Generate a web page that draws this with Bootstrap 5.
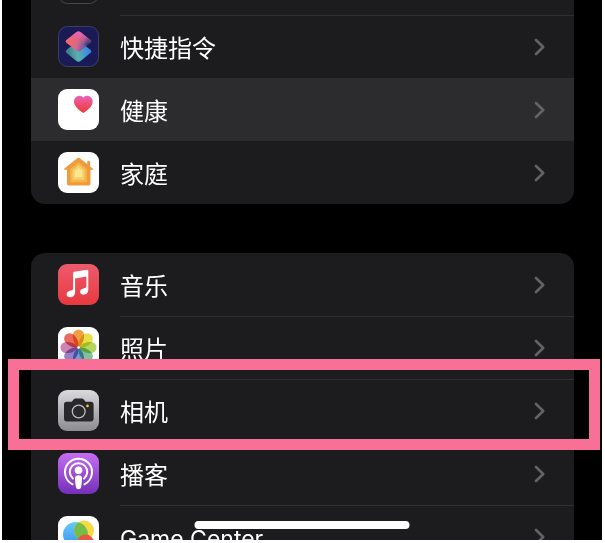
<!DOCTYPE html>
<html lang="zh-CN" data-bs-theme="dark">
<head>
<meta charset="utf-8">
<meta name="viewport" content="width=device-width, initial-scale=1">
<title>设置</title>
<link href="https://cdn.jsdelivr.net/npm/bootstrap@5.3.0/dist/css/bootstrap.min.css" rel="stylesheet">
<style>
body { background: #fff; font-family: Inter, "Noto Sans CJK SC", sans-serif; }
.frame { height: 100vh; padding: 0 3px 3px 2px; }
.screen { background: #000; padding: 0 28px 0 29px; }
.settings-group { border-radius: 14px; background: #1c1c1e; margin-bottom: 49px; }
.scrolled { margin-top: -48px; }
.settings-row { height: 63px; padding-left: 27px; color: #fff; background: transparent; }
.settings-row:hover, .settings-row:focus { color: #fff; }
.settings-row.pressed { background: #2c2c2e; }
.app-icon { width: 41px; height: 41px; margin-right: 21px; }
.row-body { padding: 3px 29px 0 0; font-size: 24px; line-height: 32px; border-top: 1px solid #303032; }
.latin { font-size: 23px; }
.settings-row:first-child .row-body, .pressed .row-body, .pressed + .settings-row .row-body { border-top-color: transparent; }
.chevron { width: 11px; height: 18px; margin-bottom: 3px; fill: none; stroke: #636366; stroke-width: 2.6; stroke-linecap: round; stroke-linejoin: round; }
.highlight { inset: -20px -26px -8px -23px; border: 11px solid #f87096; z-index: 2; pointer-events: none; }
.home-bar { width: 215px; height: 8px; bottom: 11px; z-index: 3; }
.petals { isolation: isolate; }
.petals path { mix-blend-mode: multiply; }
</style>
</head>
<body>
<svg width="0" height="0" class="position-absolute" aria-hidden="true">
  <defs>
    <linearGradient id="gTop" x1=".1" y1=".6" x2=".85" y2=".75"><stop offset="0" stop-color="#f26a62"/><stop offset=".45" stop-color="#d8668c"/><stop offset=".75" stop-color="#8a5a9c"/><stop offset="1" stop-color="#4a4a90" stop-opacity=".55"/></linearGradient>
    <linearGradient id="gPink" x1="0" y1="0" x2="0" y2="1"><stop offset="0" stop-color="#ed62c8"/><stop offset=".65" stop-color="#ed625c" stop-opacity="0"/></linearGradient>
    <linearGradient id="gLow" x1="0" y1=".5" x2="1" y2=".4"><stop offset="0" stop-color="#3d7387"/><stop offset=".45" stop-color="#57b2ad"/><stop offset="1" stop-color="#347df2"/></linearGradient>
    <linearGradient id="gHeart" x1="0" y1="0" x2="0" y2="1"><stop offset="0" stop-color="#eb62b9"/><stop offset="1" stop-color="#f0382f"/></linearGradient>
    <linearGradient id="gHouse" x1="0" y1="0" x2="0" y2="1"><stop offset="0" stop-color="#ed9c3f"/><stop offset="1" stop-color="#f19a38"/></linearGradient>
    <linearGradient id="gMusic" x1="0" y1="0" x2="0" y2="1"><stop offset="0" stop-color="#ed5b6d"/><stop offset="1" stop-color="#e7393f"/></linearGradient>
    <linearGradient id="gCamera" x1="0" y1="0" x2="0" y2="1"><stop offset="0" stop-color="#d9d9de"/><stop offset="1" stop-color="#8d8c90"/></linearGradient>
    <linearGradient id="gPod" x1="0" y1="0" x2="0" y2="1"><stop offset="0" stop-color="#c56df3"/><stop offset="1" stop-color="#7430b8"/></linearGradient>
    <linearGradient id="gBlue" x1="0" y1="0" x2="0" y2="1"><stop offset="0" stop-color="#66cdf7"/><stop offset="1" stop-color="#3b8df3"/></linearGradient>
    <clipPath id="cBlue"><circle cx="17.500" cy="18.500" r="12.500"/></clipPath>
    <symbol id="chev" viewBox="0 0 11 18"><path d="M2 2 9.200 9 2 16"/></symbol>
  </defs>
</svg>

<div class="frame">
<main class="screen position-relative overflow-hidden h-100">
  <nav class="settings-group scrolled">
    <a href="#" class="settings-row d-flex align-items-center text-decoration-none" tabindex="-1">
      <svg class="app-icon flex-shrink-0" viewBox="0 0 41 41"><rect x=".5" y=".5" width="40" height="40" rx="9" fill="#1b1b1d" stroke="#48484a"/></svg>
      <span class="row-body flex-grow-1 h-100"></span>
    </a>
    <a href="#" class="settings-row d-flex align-items-center text-decoration-none">
      <svg class="app-icon flex-shrink-0" viewBox="0 0 41 41"><rect x=".5" y=".5" width="40" height="40" rx="9" fill="#1a1b56" stroke="#3e3e63"/>
        <path d="M18 16.500q2.500-1.800 5 0l9.300 7.200q2 1.700 0 3.400L23 34.700q-2.500 1.900-5 0l-9.300-7.600q-2-1.700 0-3.400z" fill="url(#gLow)"/>
        <path d="M18 6.500q2.500-1.800 5 0l9.300 7.200q2 1.700 0 3.400L23 24.500q-2.500 1.900-5 0l-9.300-7.400q-2-1.700 0-3.400z" fill="url(#gTop)"/>
        <path d="M18 6.500q2.500-1.800 5 0l9.300 7.200q2 1.700 0 3.400L23 24.500q-2.500 1.900-5 0l-9.300-7.400q-2-1.700 0-3.400z" fill="url(#gPink)"/></svg>
      <span class="row-body flex-grow-1 h-100 d-flex align-items-center justify-content-between"><span>快捷指令</span><svg class="chevron"><use href="#chev"/></svg></span>
    </a>
    <a href="#" class="settings-row pressed d-flex align-items-center text-decoration-none">
      <svg class="app-icon flex-shrink-0" viewBox="0 0 41 41"><rect width="41" height="41" rx="9" fill="#fff"/>
        <path d="M25.300 8.800C23.500 6.400 20.500 6.300 18.400 7.700 15.900 9.400 15.400 12.700 16.600 15.500 18.100 19 22 22 25.300 24 28.600 22 32.500 19 34.100 15.500 35.300 12.700 34.700 9.400 32.200 7.700 30.100 6.300 27.100 6.400 25.300 8.800z" fill="url(#gHeart)"/></svg>
      <span class="row-body flex-grow-1 h-100 d-flex align-items-center justify-content-between"><span>健康</span><svg class="chevron"><use href="#chev"/></svg></span>
    </a>
    <a href="#" class="settings-row d-flex align-items-center text-decoration-none">
      <svg class="app-icon flex-shrink-0" viewBox="0 0 41 41"><rect width="41" height="41" rx="9" fill="#fff"/>
        <path d="M19.600 6.100q1-.8 2 0l7.600 6V9.700q0-.8.800-.8h1.300q.8 0 .8.800v4.700l3 2.400q.7.900-.5 1H32.500v14q0 1.700-1.700 1.700H10.700Q9 33.500 9 31.800v-14H6.600q-1.200-.1-.5-1z" fill="url(#gHouse)"/>
        <path d="m20.600 10.200 8.200 6.700v13.300H12.300V16.900z" fill="#f3b64d"/>
        <path d="m20.600 13 6 5v9.700H14.600V18z" fill="#f7ce68"/>
        <path d="m20.600 16 3.700 3.100v6.200h-7.400v-6.200z" fill="#fbe88c"/></svg>
      <span class="row-body flex-grow-1 h-100 d-flex align-items-center justify-content-between"><span>家庭</span><svg class="chevron"><use href="#chev"/></svg></span>
    </a>
  </nav>

  <nav class="settings-group">
    <a href="#" class="settings-row d-flex align-items-center text-decoration-none">
      <svg class="app-icon flex-shrink-0" viewBox="0 0 41 41"><rect width="41" height="41" rx="9" fill="url(#gMusic)"/>
        <path d="M15.100 9q0-1.100 1.100-1.300l12.900-1.900q1.200-.2 1.200 1v18.700c0 3-1.800 5.200-4.700 5.200-2.200 0-3.500-1.200-3.500-2.900 0-2.300 2-3.200 4.200-3.600 1.500-.3 2.100-.7 2.100-1.900V12.600l-11.300 2v13.200c0 3.300-1.900 5.500-4.800 5.500-2.300 0-3.700-1.300-3.700-3.100 0-2.300 1.900-3.300 4.100-3.700 1.700-.3 2.400-.8 2.400-2z" fill="#fff"/></svg>
      <span class="row-body flex-grow-1 h-100 d-flex align-items-center justify-content-between"><span>音乐</span><svg class="chevron"><use href="#chev"/></svg></span>
    </a>
    <a href="#" class="settings-row d-flex align-items-center text-decoration-none">
      <svg class="app-icon flex-shrink-0" viewBox="0 0 41 41"><rect width="41" height="41" rx="9" fill="#fff"/>
        <g class="petals" transform="translate(20.500 20.500)">
          <path d="M0-.5C-4-3-5.600-7-5.600-12.400a5.600 5.600 0 0 1 11.200 0C5.600-7 4-3 0-.5z" fill="#f0a043"/>
          <path d="M0-.5C-4-3-5.600-7-5.600-12.400a5.600 5.600 0 0 1 11.200 0C5.600-7 4-3 0-.5z" transform="rotate(45)" fill="#e8e04a"/>
          <path d="M0-.5C-4-3-5.600-7-5.600-12.400a5.600 5.600 0 0 1 11.200 0C5.600-7 4-3 0-.5z" transform="rotate(90)" fill="#b5d65e"/>
          <path d="M0-.5C-4-3-5.600-7-5.600-12.400a5.600 5.600 0 0 1 11.200 0C5.600-7 4-3 0-.5z" transform="rotate(135)" fill="#7fc0a0"/>
          <path d="M0-.5C-4-3-5.600-7-5.600-12.400a5.600 5.600 0 0 1 11.200 0C5.600-7 4-3 0-.5z" transform="rotate(180)" fill="#6f9ed8"/>
          <path d="M0-.5C-4-3-5.600-7-5.600-12.400a5.600 5.600 0 0 1 11.200 0C5.600-7 4-3 0-.5z" transform="rotate(225)" fill="#9583c6"/>
          <path d="M0-.5C-4-3-5.600-7-5.600-12.400a5.600 5.600 0 0 1 11.200 0C5.600-7 4-3 0-.5z" transform="rotate(270)" fill="#cb84b4"/>
          <path d="M0-.5C-4-3-5.600-7-5.600-12.400a5.600 5.600 0 0 1 11.200 0C5.600-7 4-3 0-.5z" transform="rotate(315)" fill="#e96a5e"/>
          <circle r="1.200" fill="#fff"/>
        </g></svg>
      <span class="row-body flex-grow-1 h-100 d-flex align-items-center justify-content-between"><span>照片</span><svg class="chevron"><use href="#chev"/></svg></span>
    </a>
    <a href="#" class="settings-row position-relative d-flex align-items-center text-decoration-none">
      <svg class="app-icon flex-shrink-0" viewBox="0 0 41 41"><rect width="41" height="41" rx="9" fill="url(#gCamera)"/>
        <path d="M8.800 11.800h5l1.800-2.200q.8-1 2-1h6.200q1.200 0 2 1l1.800 2.200h5.200q2.800 0 2.800 2.800v14q0 2.900-2.800 2.900h-24Q6 31.500 6 28.600v-14q0-2.800 2.800-2.800z" fill="#29292b"/>
        <circle cx="20.700" cy="21.500" r="6.400" fill="none" stroke="#bebec1" stroke-width="1.300"/><circle cx="29.500" cy="15.900" r="1.300" fill="#f6cc45"/></svg>
      <span class="row-body flex-grow-1 h-100 d-flex align-items-center justify-content-between"><span>相机</span><svg class="chevron"><use href="#chev"/></svg></span>
      <span class="highlight position-absolute"></span>
    </a>
    <a href="#" class="settings-row d-flex align-items-center text-decoration-none">
      <svg class="app-icon flex-shrink-0" viewBox="0 0 41 41"><rect width="41" height="41" rx="9" fill="url(#gPod)"/>
        <g fill="none" stroke="#fff" stroke-width="2" stroke-linecap="round"><path d="M14.600 31.300a13.500 13.500 0 1 1 11.800 0"/><path d="M14.900 25.500a8.700 8.700 0 1 1 11.200 0"/></g>
        <circle cx="20.500" cy="17.300" r="3.800" fill="#fff"/><path d="M17 25.300q0-3 3.500-3t3.500 3c0 3-.4 6-.9 8.700q-.4 2.300-2.600 2.300T17.900 34c-.5-2.700-.9-5.700-.9-8.700z" fill="#fff"/></svg>
      <span class="row-body flex-grow-1 h-100 d-flex align-items-center justify-content-between"><span>播客</span><svg class="chevron"><use href="#chev"/></svg></span>
    </a>
    <a href="#" class="settings-row d-flex align-items-center text-decoration-none">
      <svg class="app-icon flex-shrink-0" viewBox="0 0 41 41"><rect width="41" height="41" rx="9" fill="#fff"/>
        <circle cx="17.500" cy="18.500" r="12.500" fill="url(#gBlue)"/><circle cx="26" cy="14.500" r="10" fill="#f6d944"/><circle cx="26" cy="14.500" r="10" fill="#73bd4b" clip-path="url(#cBlue)"/><circle cx="27.500" cy="27" r="8.500" fill="#eb5546"/></svg>
      <span class="row-body flex-grow-1 h-100 d-flex align-items-center justify-content-between"><span class="latin">Game Center</span><svg class="chevron"><use href="#chev"/></svg></span>
    </a>
  </nav>
  <div class="home-bar position-absolute start-50 translate-middle-x bg-white rounded-pill"></div>
</main>
</div>
<script src="https://cdn.jsdelivr.net/npm/bootstrap@5.3.0/dist/js/bootstrap.bundle.min.js"></script>
</body>
</html>
